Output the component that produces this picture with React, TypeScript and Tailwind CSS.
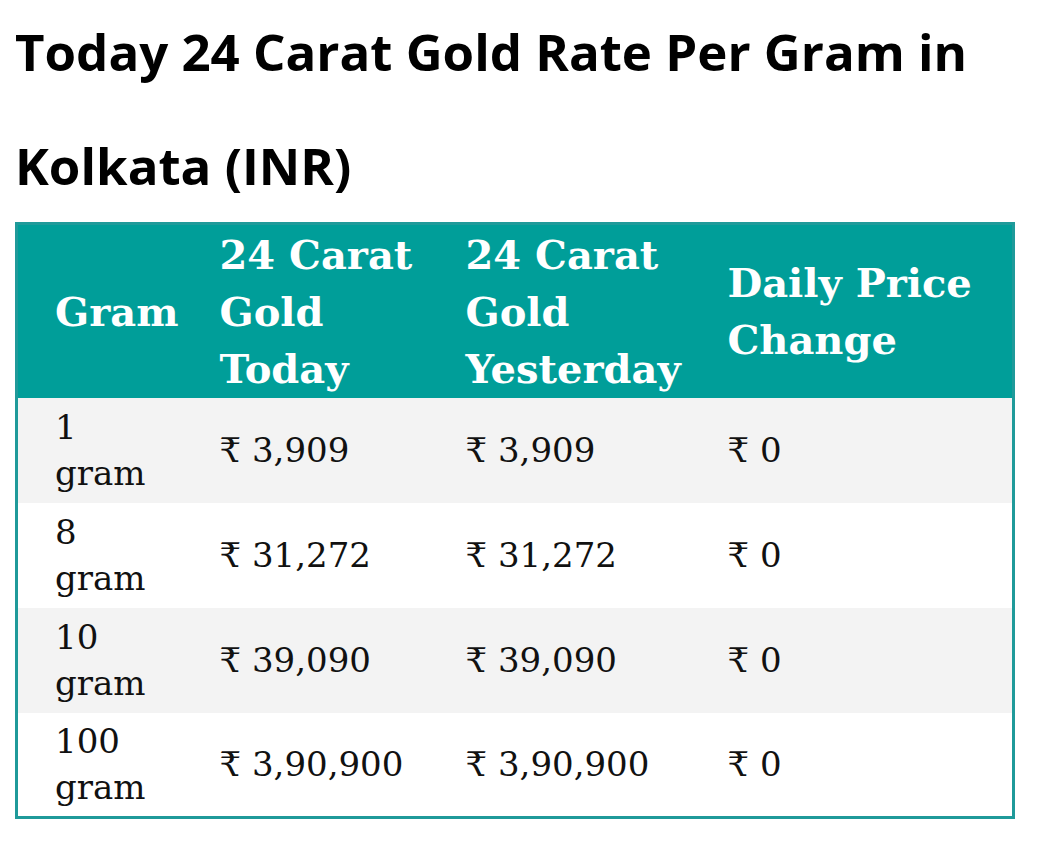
const rows = [
  { qty: '1', today: '₹ 3,909', yesterday: '₹ 3,909', change: '₹ 0' },
  { qty: '8', today: '₹ 31,272', yesterday: '₹ 31,272', change: '₹ 0' },
  { qty: '10', today: '₹ 39,090', yesterday: '₹ 39,090', change: '₹ 0' },
  { qty: '100', today: '₹ 3,90,900', yesterday: '₹ 3,90,900', change: '₹ 0' },
];

const serif = "font-['DejaVu_Serif','Noto_Serif','Noto_Sans',serif]";

export default function App() {
  return (
    <div className="min-h-screen bg-white pl-[15px] pr-[28px]">
      <h2 className="mt-[-6px] font-['Open_Sans','Noto_Sans',sans-serif] text-[51px] font-bold leading-[114px] text-black">
        Today 24 Carat Gold Rate Per Gram in Kolkata (INR)
      </h2>
      <table className={`w-[997px] table-fixed border-collapse border-[3px] border-[#1f9a9a] ${serif}`}>
        <colgroup>
          <col className="w-[185px]" />
          <col className="w-[246px]" />
          <col className="w-[262px]" />
          <col className="w-[304px]" />
        </colgroup>
        <thead>
          <tr className="h-[174px] bg-[#009e99] text-left text-[40px] font-bold leading-[57px] text-white">
            <th className="pl-[37px] pr-2 align-middle">Gram</th>
            <th className="px-[18px] align-middle">24 Carat Gold Today</th>
            <th className="pl-[18px] pr-1 align-middle">24 Carat Gold Yesterday</th>
            <th className="px-[18px] align-middle">Daily Price Change</th>
          </tr>
        </thead>
        <tbody className="text-[34px] leading-[46px] text-[#111]">
          {rows.map((row, i) => (
            <tr key={row.qty} className={`h-[105px] ${i % 2 === 0 ? 'bg-[#f3f3f3]' : 'bg-white'}`}>
              <td className="pl-[37px] pr-2 align-middle">
                <span className="block">{row.qty}</span> <span className="block">gram</span>
              </td>
              <td className="px-[18px] align-middle">{row.today}</td>
              <td className="pl-[18px] pr-1 align-middle">{row.yesterday}</td>
              <td className="px-[18px] align-middle">{row.change}</td>
            </tr>
          ))}
        </tbody>
      </table>
    </div>
  );
}
